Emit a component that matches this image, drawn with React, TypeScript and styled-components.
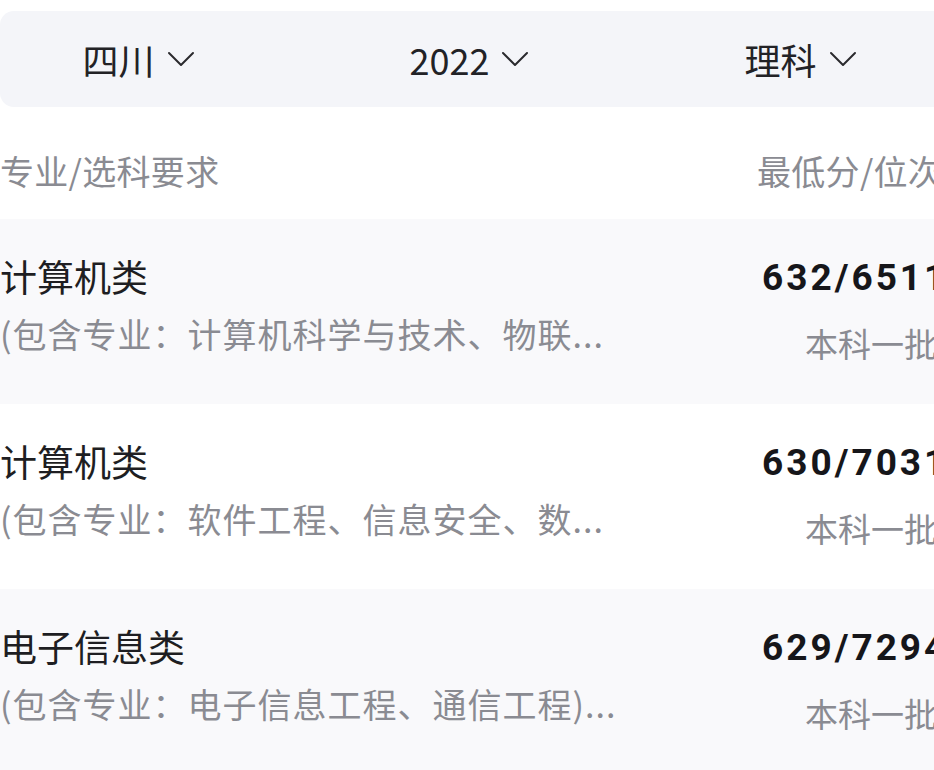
import React from "react";
import styled, { createGlobalStyle } from "styled-components";

const GlobalStyle = createGlobalStyle`
  html, body {
    margin: 0;
    padding: 0;
    background: #ffffff;
    overflow: hidden;
  }
  body {
    font-family: "Noto Sans CJK SC", "Noto Sans", sans-serif;
  }
`;

const Page = styled.div`
  width: 1010px;
  padding-top: 11px;
`;

const FilterBar = styled.div`
  height: 96px;
  border-radius: 14px;
  background: #f4f5f9;
  display: flex;
  align-items: center;
  overflow: hidden;
`;

const FilterGrid = styled.div`
  display: grid;
  grid-template-columns: repeat(3, 331px);
  margin-left: -27px;
`;

const Filter = styled.div`
  display: flex;
  align-items: center;
  justify-content: center;
  gap: 12px;
  font-size: 36px;
  color: #222226;
  line-height: 1;
`;

const Chevron = () => (
  <svg width="28" height="16" viewBox="0 0 28 16" fill="none">
    <polyline
      points="2,2 14,14 26,2"
      stroke="#2a2a2e"
      strokeWidth="2"
      strokeLinecap="round"
      strokeLinejoin="round"
    />
  </svg>
);

const Header = styled.div`
  height: 112px;
  display: flex;
  align-items: center;
  justify-content: space-between;
  padding-top: 14px;
  box-sizing: border-box;
  font-size: 34px;
  letter-spacing: 0.3px;
  color: #8a8b92;
`;

const HeaderRight = styled.span`
  width: 253px;
`;

const Row = styled.div<{ $shaded: boolean }>`
  height: 185px;
  display: flex;
  align-items: center;
  justify-content: space-between;
  background: ${(p) => (p.$shaded ? "#f9f9fb" : "#ffffff")};
`;

const Major = styled.div`
  display: flex;
  flex-direction: column;
  gap: 11px;
  margin-top: -14px;
`;

const Title = styled.div`
  font-size: 37px;
  line-height: 47px;
  color: #1e1e22;
`;

const Sub = styled.div`
  font-size: 34px;
  line-height: 46px;
  letter-spacing: 1px;
  color: #8a8b92;
  white-space: nowrap;
`;

const Score = styled.div`
  width: 248px;
  display: flex;
  flex-direction: column;
  gap: 19px;
  margin-top: -3px;
`;

const ScoreValue = styled.div`
  font-family: Roboto, "Noto Sans", sans-serif;
  font-weight: 700;
  font-size: 37px;
  line-height: 46px;
  letter-spacing: 3px;
  color: #16161a;
`;

const Batch = styled.div`
  font-size: 33px;
  line-height: 46px;
  color: #8a8b92;
  padding-left: 43px;
`;

const rows = [
  {
    title: "计算机类",
    sub: "(包含专业：计算机科学与技术、物联...",
    score: "632/6511",
    batch: "本科一批",
  },
  {
    title: "计算机类",
    sub: "(包含专业：软件工程、信息安全、数...",
    score: "630/7031",
    batch: "本科一批",
  },
  {
    title: "电子信息类",
    sub: "(包含专业：电子信息工程、通信工程)...",
    score: "629/7294",
    batch: "本科一批",
  },
];

export default function App() {
  return (
    <Page>
      <GlobalStyle />
      <FilterBar>
        <FilterGrid>
          {["四川", "2022", "理科"].map((f) => (
            <Filter key={f}>
              {f}
              <Chevron />
            </Filter>
          ))}
        </FilterGrid>
      </FilterBar>
      <Header>
        <span>专业/选科要求</span>
        <HeaderRight>最低分/位次</HeaderRight>
      </Header>
      {rows.map((r, i) => (
        <Row key={i} $shaded={i % 2 === 0}>
          <Major>
            <Title>{r.title}</Title>
            <Sub>{r.sub}</Sub>
          </Major>
          <Score>
            <ScoreValue>{r.score}</ScoreValue>
            <Batch>{r.batch}</Batch>
          </Score>
        </Row>
      ))}
    </Page>
  );
}
